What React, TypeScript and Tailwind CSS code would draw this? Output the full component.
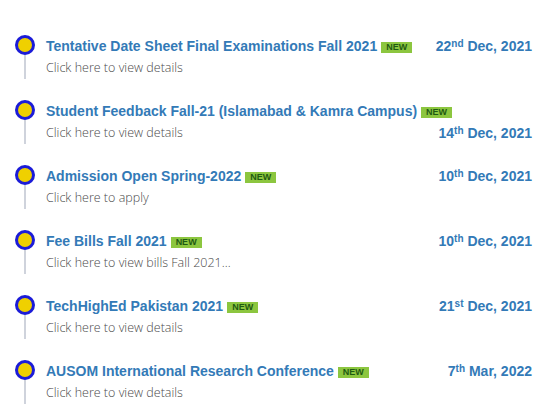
const items = [
  { title: 'Tentative Date Sheet Final Examinations Fall 2021', sub: 'Click here to view details', day: '22', sfx: 'nd', rest: 'Dec, 2021' },
  { title: 'Student Feedback Fall-21 (Islamabad & Kamra Campus)', sub: 'Click here to view details', day: '14', sfx: 'th', rest: 'Dec, 2021' },
  { title: 'Admission Open Spring-2022', sub: 'Click here to apply', day: '10', sfx: 'th', rest: 'Dec, 2021' },
  { title: 'Fee Bills Fall 2021', sub: 'Click here to view bills Fall 2021...', day: '10', sfx: 'th', rest: 'Dec, 2021' },
  { title: 'TechHighEd Pakistan 2021', sub: 'Click here to view details', day: '21', sfx: 'st', rest: 'Dec, 2021' },
  { title: 'AUSOM International Research Conference', sub: 'Click here to view details', day: '7', sfx: 'th', rest: 'Mar, 2022' },
]

export default function App() {
  return (
    <div className="w-[553px] h-[413px] overflow-hidden bg-white pt-[35px]">
      <ul>
        {items.map((it, i) => (
          <li key={i} className={`flex ${i < items.length - 1 ? 'pb-[21px]' : ''}`}>
            <div className="w-[46px] shrink-0 flex flex-col items-start pl-[15px]">
              <div className="w-[20px] h-[20px] rounded-full border-[3px] border-[#1c1cd8] bg-[#efd000] shrink-0" />
              <div className="w-[2px] ml-[9px] flex-1 bg-[#cfd3dc]" />
            </div>
            <div className="flex-1 pr-[21px]">
              <div className="leading-[22px] text-[14px] font-bold text-[#337ab7] font-['Liberation_Sans',Arial,sans-serif]">
                <span>{it.title}</span>
                <span className="inline-block align-[1px] ml-[4px] px-[5px] h-[11px] leading-[11px] text-[9px] font-bold text-[#1f5a12] bg-[#8cc63f]">NEW</span>
                <span className="float-right whitespace-nowrap">
                  {it.day}
                  <sup className="text-[10px] top-[-0.45em]">{it.sfx}</sup> {it.rest}
                </span>
              </div>
              <div className="leading-[22px] text-[12.5px] font-light text-[#4a4a4a] font-['Open_Sans',sans-serif]">{it.sub}</div>
            </div>
          </li>
        ))}
      </ul>
    </div>
  )
}
